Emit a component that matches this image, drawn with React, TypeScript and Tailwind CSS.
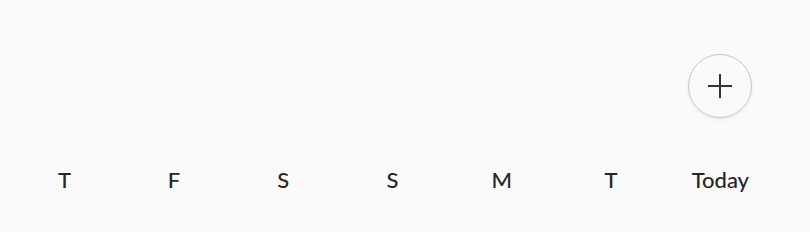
const days = ['T', 'F', 'S', 'S', 'M', 'T', 'Today'];

const App = () => {
  return (
    <div className="h-[232px] w-[810px] bg-[#fafafa] pl-[10px] pr-[35px] font-['Lato',sans-serif] text-[#262626]">
      {/* add button row */}
      <div className="grid grid-cols-7 pt-[54px]">
        <div className="col-start-7 flex justify-center">
          <button className="flex h-[64px] w-[64px] items-center justify-center rounded-full border-[1.5px] border-[#c8c8c8] bg-[#fafafa] shadow-[0_2px_4px_rgba(0,0,0,0.06)]">
            <svg width="26" height="26" viewBox="0 0 26 26" fill="none">
              <path d="M13 1v24M1 13h24" stroke="#333" strokeWidth="2" />
            </svg>
          </button>
        </div>
      </div>

      {/* day labels */}
      <div className="mt-[48px] grid grid-cols-7">
        {days.map((d, i) => (
          <div key={i} className="text-center text-[22px] font-medium leading-[28px]">
            {d}
          </div>
        ))}
      </div>
    </div>
  );
};

export default App;
